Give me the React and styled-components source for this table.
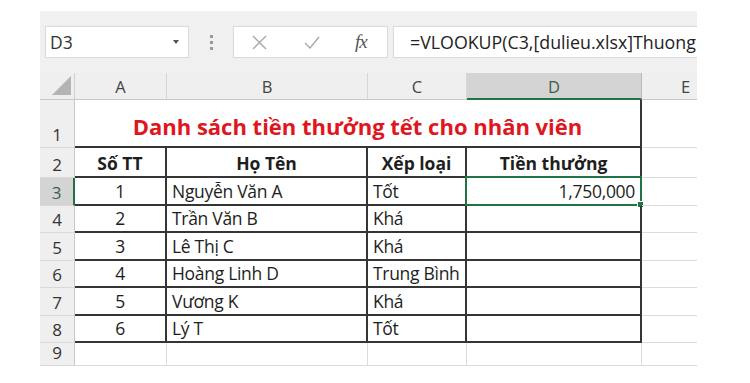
import React from "react";
import styled, { createGlobalStyle } from "styled-components";

const GlobalStyle = createGlobalStyle`
  html, body { margin: 0; padding: 0; background: #ffffff; }
  body { font-family: "Open Sans", "Noto Sans", sans-serif; }
`;

const Frame = styled.div`
  margin: 11px 0 0 40px;
  width: 657px;
  height: 355px;
  overflow: hidden;
  background: #f0f0f0;
`;

const Toolbar = styled.div`
  height: 62px;
  box-sizing: border-box;
  padding: 15px 0 0 5px;
  display: flex;
  align-items: flex-start;
`;

const Box = styled.div`
  height: 32px;
  box-sizing: border-box;
  border: 1px solid #d9d9d9;
  background: #ffffff;
  display: flex;
  align-items: center;
  flex-shrink: 0;
`;

const NameBox = styled(Box)`
  width: 144px;
  justify-content: space-between;
  padding: 0 9px 0 4px;
  font-size: 17.5px;
  color: #333;
`;

const Caret = styled.span`
  width: 0;
  height: 0;
  border-left: 3.5px solid transparent;
  border-right: 3.5px solid transparent;
  border-top: 4px solid #555;
`;

const Grip = styled.div`
  width: 44px;
  height: 32px;
  flex-shrink: 0;
  display: flex;
  flex-direction: column;
  align-items: center;
  justify-content: center;
  gap: 3px;
  padding-left: 1px;
  box-sizing: border-box;
`;

const Dot = styled.span`
  width: 3px;
  height: 3px;
  background: #9a9a9a;
`;

const IconBox = styled(Box)`
  width: 155px;
  padding: 0 0 0 17px;
`;

const IconSlot = styled.div`
  width: ${(p) => p.$w}px;
  display: flex;
  align-items: center;
  justify-content: flex-start;
`;

const Fx = styled.span`
  font-family: "Liberation Serif", "DejaVu Serif", serif;
  font-style: italic;
  font-size: 19px;
  color: #555;
  letter-spacing: -1px;
`;

const FormulaBox = styled(Box)`
  width: 360px;
  margin-left: 5px;
  padding-left: 16px;
  font-size: 17.8px;
  color: #222;
  white-space: nowrap;
`;

const Grid = styled.div`
  display: grid;
  grid-template-columns: 35px 92px 201px 99px 175px 88px;
  grid-template-rows: 27px 48px 30px 28px 27px 28px 27px 28px 27px 23px;
  background: #ffffff;
  width: 690px;
`;

const Corner = styled.div`
  background: #efefef;
  border-right: 1px solid #cfcfcf;
  border-bottom: 1px solid #c8c8c8;
  box-sizing: border-box;
  position: relative;
  &::after {
    content: "";
    position: absolute;
    right: 3px;
    bottom: 4px;
    width: 0;
    height: 0;
    border-left: 19px solid transparent;
    border-bottom: 19px solid #b4b4b4;
  }
`;

const ColHead = styled.div`
  background: ${(p) => (p.$sel ? "#d4d4d4" : "#efefef")};
  border-right: 1px solid ${(p) => (p.$sel ? "#b9b9b9" : "#d6d6d6")};
  border-bottom: ${(p) => (p.$sel ? "2px solid #217346" : "1px solid #c8c8c8")};
  box-sizing: border-box;
  display: flex;
  align-items: center;
  justify-content: center;
  padding-top: 1px;
  font-size: 16.5px;
  color: ${(p) => (p.$sel ? "#3c5e4a" : "#444")};
`;

const RowHead = styled.div`
  background: ${(p) => (p.$sel ? "#d4d4d4" : "#efefef")};
  border-right: ${(p) => (p.$sel ? "2px solid #217346" : "1px solid #c8c8c8")};
  border-bottom: 1px solid #d9d9d9;
  box-sizing: border-box;
  display: flex;
  align-items: flex-end;
  justify-content: center;
  padding-bottom: 1px;
  font-size: 17px;
  color: ${(p) => (p.$sel ? "#3c5e4a" : "#333")};
`;

const Cell = styled.div`
  position: relative;
  box-sizing: border-box;
  grid-column: ${(p) => (p.$span ? `span ${p.$span}` : "auto")};
  border-right: ${(p) => (p.$dark ? "2px solid #353535" : "1px solid #dcdcdc")};
  border-bottom: ${(p) => (p.$dark ? "2px solid #353535" : "1px solid #dcdcdc")};
  display: flex;
  align-items: flex-end;
  justify-content: ${(p) => p.$align || "flex-start"};
  padding: 0 5px ${(p) => p.$pb ?? 1}px 5px;
  font-size: ${(p) => p.$size || 17.5}px;
  font-weight: ${(p) => (p.$bold ? 700 : 400)};
  letter-spacing: ${(p) => (p.$bold ? "0" : "-0.3px")};
  color: ${(p) => p.$color || "#1e1e1e"};
  white-space: nowrap;
`;

const Selection = styled.div`
  position: absolute;
  left: -2px;
  top: -2px;
  right: -2px;
  bottom: -2px;
  border: 2px solid #217346;
  pointer-events: none;
  &::after {
    content: "";
    position: absolute;
    right: -4px;
    bottom: -4px;
    width: 5px;
    height: 5px;
    background: #217346;
    border: 1px solid #ffffff;
  }
`;

const cols = ["A", "B", "C", "D", "E"];

const rows = [
  ["1", "Nguyễn Văn A", "Tốt", "1,750,000"],
  ["2", "Trần Văn B", "Khá", ""],
  ["3", "Lê Thị C", "Khá", ""],
  ["4", "Hoàng Linh D", "Trung Bình", ""],
  ["5", "Vương K", "Khá", ""],
  ["6", "Lý T", "Tốt", ""],
];

function XIcon() {
  return (
    <svg width="17" height="17" viewBox="0 0 17 17">
      <path d="M2 2 L15 15 M15 2 L2 15" stroke="#a8a8a8" strokeWidth="1.4" fill="none" />
    </svg>
  );
}

function CheckIcon() {
  return (
    <svg width="18" height="17" viewBox="0 0 18 17">
      <path d="M2 9 L7 14 L16 3" stroke="#a8a8a8" strokeWidth="1.4" fill="none" />
    </svg>
  );
}

export default function App() {
  return (
    <>
      <GlobalStyle />
      <Frame>
        <Toolbar>
          <NameBox>
            <span>D3</span>
            <Caret />
          </NameBox>
          <Grip>
            <Dot />
            <Dot />
            <Dot />
          </Grip>
          <IconBox>
            <IconSlot $w={52}><XIcon /></IconSlot>
            <IconSlot $w={52}><CheckIcon /></IconSlot>
            <IconSlot $w={30}><Fx>fx</Fx></IconSlot>
          </IconBox>
          <FormulaBox>=VLOOKUP(C3,[dulieu.xlsx]Thuong</FormulaBox>
        </Toolbar>
        <Grid>
          <Corner />
          {cols.map((c) => (
            <ColHead key={c} $sel={c === "D"}>{c}</ColHead>
          ))}

          <RowHead>1</RowHead>
          <Cell $span={4} $dark $align="center" $bold $size={22} $pb={5} $color="#e0161e">
            Danh sách tiền thưởng tết cho nhân viên
          </Cell>
          <Cell />

          <RowHead>2</RowHead>
          <Cell $dark $bold $align="center">Số TT</Cell>
          <Cell $dark $bold $align="center">Họ Tên</Cell>
          <Cell $dark $bold $align="center">Xếp loại</Cell>
          <Cell $dark $bold $align="center">Tiền thưởng</Cell>
          <Cell />

          {rows.map((r, i) => (
            <React.Fragment key={i}>
              <RowHead $sel={i === 0}>{i + 3}</RowHead>
              <Cell $dark $align="center">{r[0]}</Cell>
              <Cell $dark>{r[1]}</Cell>
              <Cell $dark>{r[2]}</Cell>
              <Cell $dark $align="flex-end">
                {r[3]}
                {i === 0 && <Selection />}
              </Cell>
              <Cell />
            </React.Fragment>
          ))}

          <RowHead>9</RowHead>
          <Cell />
          <Cell />
          <Cell />
          <Cell />
          <Cell />
        </Grid>
      </Frame>
    </>
  );
}
